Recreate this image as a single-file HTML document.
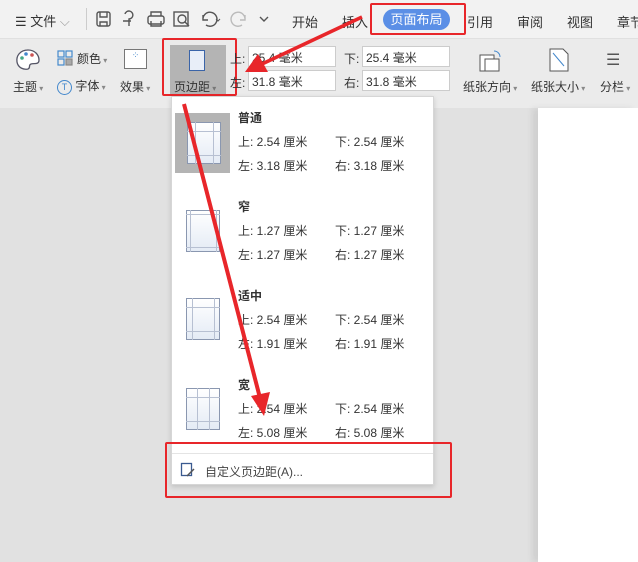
<!DOCTYPE html>
<html><head><meta charset="utf-8"><style>
*{margin:0;padding:0;box-sizing:border-box}
body{width:638px;height:562px;overflow:hidden;background:#e1e1e1;font-family:"Liberation Sans","Noto Sans CJK SC",sans-serif;font-size:12px;color:#333;position:relative}
.a{position:absolute;white-space:nowrap}
.top{position:absolute;left:0;top:0;width:638px;height:38px;background:#f2f2f2}
.rib{position:absolute;left:0;top:38px;width:638px;height:70px;background:#ebebeb;border-top:1px solid #e0e0e0}
.page{position:absolute;left:538px;top:108px;width:100px;height:454px;background:#fff;box-shadow:-6px 0 6px rgba(0,0,0,.08)}
.inp{position:absolute;height:21px;background:#fff;border:1px solid #ccc;font-size:12px;padding:2px 0 0 3px}
.dd{position:absolute;left:171px;top:96px;width:263px;height:389px;background:#fff;border:1px solid #d6d6d6;box-shadow:0 2px 5px rgba(0,0,0,.15)}
.t{font-weight:bold;font-size:12px}
.red{position:absolute;border:2px solid #e8262a;border-radius:2px}
.thumb{position:absolute;width:34px;height:42px;border:1px solid #8a97b0;background:linear-gradient(#fff,#e4ebf5)}
.ln{position:absolute;background:#b7c0d2}
</style></head><body>
<div class="top"></div>
<div class="rib"></div>
<div class="page"></div>
<!-- top bar -->
<div class="a" style="left:15px;top:11px;font-size:13px">☰ 文件 <span style="color:#999">⌵</span></div>
<div class="a" style="left:86px;top:8px;width:1px;height:22px;background:#ccc"></div>
<svg class="a" style="left:95px;top:9px" width="180" height="20" fill="none" stroke="#555" stroke-width="1.4">
<rect x="2" y="3" width="13" height="14" rx="2"/><path d="M5 3v5h7V3M5 17v-4h7v4"/>
<path d="M30 5a4 4 0 1 1 4 5v7M28 12h8"/>
<rect x="53" y="7" width="16" height="8" rx="2"/><path d="M56 7V3h10v4M56 12v5h10v-5"/>
<rect x="79" y="3" width="14" height="14"/><circle cx="87" cy="10" r="4"/><path d="M90 13l4 4"/>
<path d="M108 6v5h5M108 11a7 7 0 1 1 3 5"/><path d="M121 10l2 2 2-2" stroke-width="1"/>
<path d="M150 6v5h-5M150 11a7 7 0 1 0-3 5" stroke="#bbb"/>
<path d="M165 8l4 4 4-4"/>
</svg>
<div class="a" style="left:292px;top:12px;font-size:13px">开始</div>
<div class="a" style="left:342px;top:12px;font-size:13px">插入</div>
<div class="a" style="left:383px;top:9px;width:67px;height:21px;background:#5b8fe6;border-radius:11px;color:#fff;font-size:13px;text-align:center;line-height:21px">页面布局</div>
<div class="a" style="left:467px;top:12px;font-size:13px">引用</div>
<div class="a" style="left:517px;top:12px;font-size:13px">审阅</div>
<div class="a" style="left:567px;top:12px;font-size:13px">视图</div>
<div class="a" style="left:617px;top:12px;font-size:13px">章节</div>
<div class="red" style="left:370px;top:3px;width:96px;height:32px"></div>
<!-- ribbon -->
<svg class="a" style="left:14px;top:47px" width="28" height="26"><path d="M14 3C6 3 2 9 3 15s7 8 11 7c3-1 0-4 3-5s8 1 8-4S21 3 14 3z" fill="#fff" stroke="#556" stroke-width="1.3"/><circle cx="8" cy="11" r="1.8" fill="#4a8"/><circle cx="12" cy="7" r="1.8" fill="#48c"/><circle cx="18" cy="8" r="1.8" fill="#c55"/></svg>
<div class="a" style="left:13px;top:78px">主题<span style="font-size:8px;color:#888"> ▾</span></div>
<svg class="a" style="left:57px;top:50px" width="16" height="16" fill="none" stroke="#48c" stroke-width="1.2"><rect x="1" y="1" width="6" height="6"/><rect x="9" y="1" width="6" height="6"/><rect x="1" y="9" width="6" height="6"/><rect x="9" y="9" width="6" height="6" fill="#aaa" stroke="#888"/></svg>
<div class="a" style="left:77px;top:50px">颜色<span style="font-size:8px;color:#888"> ▾</span></div>
<div class="a" style="left:57px;top:77px"><span style="display:inline-block;width:15px;height:15px;border:1.3px solid #48c;border-radius:50%;font-size:9px;text-align:center;line-height:13px;color:#48c">T</span> 字体<span style="font-size:8px;color:#888"> ▾</span></div>
<div class="a" style="left:124px;top:49px;width:23px;height:20px;border:1px solid #777;background:#fff;font-size:9px;color:#48c;text-align:center">⁘</div>
<div class="a" style="left:120px;top:78px">效果<span style="font-size:8px;color:#888"> ▾</span></div>
<div class="a" style="left:170px;top:45px;width:56px;height:50px;background:#b4b4b4"></div>
<div class="a" style="left:189px;top:50px;width:16px;height:21px;border:1.5px solid #3a64a8;background:#e8eef8"></div>
<div class="a" style="left:174px;top:78px">页边距<span style="font-size:8px;color:#777"> ▾</span></div>
<div class="red" style="left:162px;top:38px;width:75px;height:58px"></div>
<div class="a" style="left:230px;top:50px">上:</div>
<div class="inp" style="left:248px;top:46px;width:88px">25.4 毫米</div>
<div class="a" style="left:230px;top:74px">左:</div>
<div class="inp" style="left:248px;top:70px;width:88px">31.8 毫米</div>
<div class="a" style="left:344px;top:50px">下:</div>
<div class="inp" style="left:362px;top:46px;width:88px">25.4 毫米</div>
<div class="a" style="left:344px;top:74px">右:</div>
<div class="inp" style="left:362px;top:70px;width:88px">31.8 毫米</div>
<svg class="a" style="left:477px;top:47px" width="30" height="28"><rect x="3" y="8" width="14" height="16" fill="#fff" stroke="#555"/><rect x="8" y="12" width="14" height="12" fill="#fff" stroke="#555"/><path d="M17 4a6 6 0 0 1 6 6" stroke="#48c" fill="none"/></svg>
<div class="a" style="left:463px;top:78px">纸张方向<span style="font-size:8px;color:#888"> ▾</span></div>
<svg class="a" style="left:548px;top:47px" width="22" height="26"><path d="M2 2h13l5 5v17H2z" fill="#fff" stroke="#555"/><path d="M5 6l11 13" stroke="#48c"/></svg>
<div class="a" style="left:531px;top:78px">纸张大小<span style="font-size:8px;color:#888"> ▾</span></div>
<div class="a" style="left:606px;top:50px;font-size:16px;color:#555">☰</div>
<div class="a" style="left:600px;top:78px">分栏<span style="font-size:8px;color:#888"> ▾</span></div>
<!-- dropdown -->
<div class="dd"></div>
<div class="a" style="left:175px;top:113px;width:55px;height:60px;background:#b4b4b4"></div>
<div class="thumb" style="left:187px;top:122px"></div>
<div class="ln" style="left:187px;top:131px;width:34px;height:1px"></div><div class="ln" style="left:187px;top:155px;width:34px;height:1px"></div>
<div class="ln" style="left:195px;top:122px;width:1px;height:42px"></div><div class="ln" style="left:213px;top:122px;width:1px;height:42px"></div>
<div class="thumb" style="left:186px;top:210px"></div>
<div class="ln" style="left:186px;top:214px;width:34px;height:1px"></div><div class="ln" style="left:186px;top:247px;width:34px;height:1px"></div>
<div class="ln" style="left:190px;top:210px;width:1px;height:42px"></div><div class="ln" style="left:216px;top:210px;width:1px;height:42px"></div>
<div class="thumb" style="left:186px;top:298px"></div>
<div class="ln" style="left:186px;top:307px;width:34px;height:1px"></div><div class="ln" style="left:186px;top:331px;width:34px;height:1px"></div>
<div class="ln" style="left:192px;top:298px;width:1px;height:42px"></div><div class="ln" style="left:214px;top:298px;width:1px;height:42px"></div>
<div class="thumb" style="left:186px;top:388px"></div>
<div class="ln" style="left:186px;top:397px;width:34px;height:1px"></div><div class="ln" style="left:186px;top:421px;width:34px;height:1px"></div>
<div class="ln" style="left:197px;top:388px;width:1px;height:42px"></div><div class="ln" style="left:209px;top:388px;width:1px;height:42px"></div>
<div class="a t" style="left:238px;top:109px">普通</div>
<div class="a" style="left:238px;top:133px">上: 2.54 厘米</div><div class="a" style="left:335px;top:133px">下: 2.54 厘米</div>
<div class="a" style="left:238px;top:157px">左: 3.18 厘米</div><div class="a" style="left:335px;top:157px">右: 3.18 厘米</div>
<div class="a t" style="left:238px;top:198px">窄</div>
<div class="a" style="left:238px;top:222px">上: 1.27 厘米</div><div class="a" style="left:335px;top:222px">下: 1.27 厘米</div>
<div class="a" style="left:238px;top:246px">左: 1.27 厘米</div><div class="a" style="left:335px;top:246px">右: 1.27 厘米</div>
<div class="a t" style="left:238px;top:287px">适中</div>
<div class="a" style="left:238px;top:311px">上: 2.54 厘米</div><div class="a" style="left:335px;top:311px">下: 2.54 厘米</div>
<div class="a" style="left:238px;top:335px">左: 1.91 厘米</div><div class="a" style="left:335px;top:335px">右: 1.91 厘米</div>
<div class="a t" style="left:238px;top:376px">宽</div>
<div class="a" style="left:238px;top:400px">上: 2.54 厘米</div><div class="a" style="left:335px;top:400px">下: 2.54 厘米</div>
<div class="a" style="left:238px;top:424px">左: 5.08 厘米</div><div class="a" style="left:335px;top:424px">右: 5.08 厘米</div>
<div class="a" style="left:172px;top:453px;width:261px;height:1px;background:#e4e4e4"></div>
<svg class="a" style="left:180px;top:462px" width="16" height="16"><rect x="1.5" y="1.5" width="10" height="12" fill="none" stroke="#3a5a90" stroke-width="1.3"/><path d="M7 14l7-7" stroke="#555" stroke-width="1.5"/></svg>
<div class="a" style="left:205px;top:463px;color:#444">自定义页边距(A)...</div>
<div class="red" style="left:165px;top:442px;width:287px;height:56px"></div>
<!-- arrows -->
<svg class="a" style="left:0;top:0" width="638" height="562">
<line x1="362" y1="17" x2="262" y2="64" stroke="#e8262a" stroke-width="3.5"/>
<polygon points="245,72 258,54 268,72" fill="#e8262a"/>
<line x1="184" y1="104" x2="260" y2="398" stroke="#e8262a" stroke-width="4"/>
<polygon points="264,416 251,396 270,392" fill="#e8262a"/>
</svg>
</body></html>
